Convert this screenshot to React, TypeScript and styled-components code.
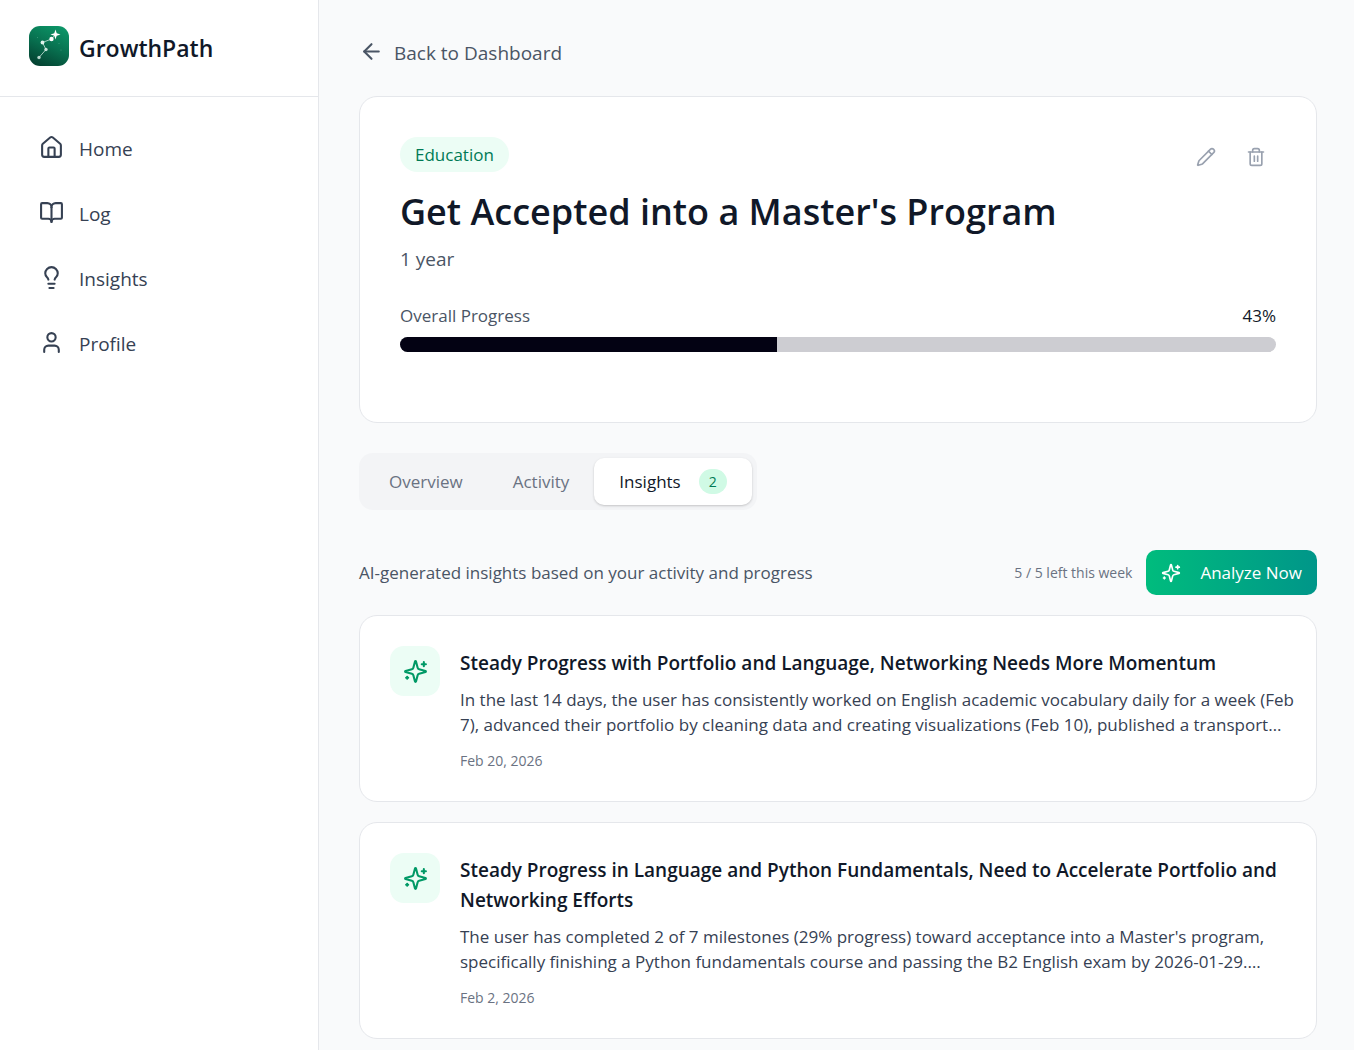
import React from 'react';
import styled, { createGlobalStyle } from 'styled-components';
import { ArrowLeft, BookOpen, Lightbulb } from 'lucide-react';

const GlobalStyle = createGlobalStyle`
  *, *::before, *::after { box-sizing: border-box; }
  body {
    margin: 0;
    background: #f9fafb;
    color: #101828;
    font-family: 'Open Sans', 'Noto Sans', 'Segoe UI', sans-serif;
    font-size: 17px;
    line-height: 25px;
  }
  h1, h2, p, ul { margin: 0; padding: 0; }
  button { font: inherit; border: 0; cursor: pointer; }
  a { color: inherit; text-decoration: none; }
`;

const Page = styled.div`
  display: flex;
  min-height: 100vh;
`;

const Sidebar = styled.aside`
  flex: 0 0 319px;
  background: #ffffff;
  border-right: 1px solid #e5e7eb;
`;

const Brand = styled.div`
  display: flex;
  align-items: center;
  gap: 10px;
  height: 97px;
  padding: 0 29px 4px;
  border-bottom: 1px solid #e5e7eb;
`;

const BrandName = styled.span`
  padding-top: 4px;
  font-size: 23px;
  line-height: 30px;
  font-weight: 600;
`;

const NavList = styled.ul`
  display: flex;
  flex-direction: column;
  gap: 5px;
  padding: 20px;
  list-style: none;
`;

const NavLink = styled.a`
  display: flex;
  align-items: center;
  gap: 15px;
  height: 60px;
  padding: 0 20px 0 19px;
  border-radius: 12px;
  font-size: 19px;
  line-height: 30px;
  color: #364153;
`;

const LinkLabel = styled.span`
  padding-top: 3px;
`;

const Main = styled.main`
  flex: 1;
  min-width: 0;
  padding: 35px 37px 10px 40px;
`;

const BackLink = styled.a`
  display: inline-flex;
  align-items: center;
  gap: 10px;
  margin-bottom: 28px;
  font-size: 19px;
  line-height: 30px;
  color: #4a5565;
`;

const Card = styled.section`
  background: #ffffff;
  border: 1px solid #e5e7eb;
  border-radius: 18px;
`;

const GoalCard = styled(Card)`
  padding: 40px 40px 70px;
`;

const GoalTop = styled.div`
  display: flex;
  justify-content: space-between;
  align-items: flex-start;
  margin-bottom: 29px;
`;

const Category = styled.span`
  display: inline-block;
  padding: 5px 15px;
  border-radius: 999px;
  background: #ecfdf5;
  color: #007a55;
`;

const GoalTitle = styled.h1`
  margin: 17px 0 10px;
  font-size: 36px;
  line-height: 45px;
  font-weight: 600;
`;

const Duration = styled.p`
  font-size: 19px;
  line-height: 30px;
  color: #4a5565;
`;

const Actions = styled.div`
  display: flex;
  gap: 10px;
`;

const IconButton = styled.button`
  display: grid;
  place-items: center;
  width: 40px;
  height: 40px;
  padding: 0;
  border-radius: 10px;
  background: transparent;
  color: #99a1af;
`;

const ProgressLabels = styled.div`
  display: flex;
  justify-content: space-between;
  margin-bottom: 9px;
  color: #4a5565;
`;

const ProgressValue = styled.span`
  color: #101828;
`;

const Track = styled.div`
  height: 15px;
  border-radius: 999px;
  background: #cdcdd2;
  overflow: hidden;
`;

const Fill = styled.div`
  height: 100%;
  background: #030213;
`;

const Tabs = styled.div`
  display: inline-flex;
  margin: 30px 0 40px;
  padding: 5px;
  border-radius: 14px;
  background: #f3f4f6;
`;

const Tab = styled.button<{ $active?: boolean }>`
  display: flex;
  align-items: center;
  gap: 18px;
  height: 47px;
  padding: 0 25px;
  border-radius: 10px;
  background: ${(p) => (p.$active ? '#ffffff' : 'transparent')};
  color: ${(p) => (p.$active ? '#101828' : '#6a7282')};
  box-shadow: ${(p) => (p.$active ? '0 1px 3px rgba(0, 0, 0, 0.1), 0 1px 2px rgba(0, 0, 0, 0.1)' : 'none')};
`;

const Count = styled.span`
  padding: 0 10px;
  border-radius: 999px;
  background: #d0fae5;
  color: #007a55;
  font-size: 14px;
  line-height: 25px;
`;

const Toolbar = styled.div`
  display: flex;
  align-items: center;
  justify-content: space-between;
  margin-bottom: 20px;
  color: #4a5565;
`;

const ToolbarEnd = styled.div`
  display: flex;
  align-items: center;
  gap: 14px;
`;

const Small = styled.span`
  display: block;
  font-size: 14px;
  line-height: 20px;
  color: #6a7282;
`;

const AnalyzeButton = styled.button`
  display: flex;
  align-items: center;
  gap: 19px;
  height: 45px;
  padding: 0 15px;
  border-radius: 10px;
  background: linear-gradient(90deg, #00bc7d, #009689);
  color: #ffffff;
`;

const InsightList = styled.div`
  display: flex;
  flex-direction: column;
  gap: 20px;
`;

const InsightCard = styled(Card)`
  display: flex;
  gap: 20px;
  padding: 30px 15px 30px 30px;
`;

const InsightIcon = styled.div`
  display: grid;
  place-items: center;
  flex: 0 0 50px;
  height: 50px;
  border-radius: 14px;
  background: #ecfdf5;
  color: #009966;
`;

const InsightBody = styled.div`
  min-width: 0;
`;

const InsightTitle = styled.h2`
  padding-top: 2px;
  margin-bottom: 9px;
  font-size: 19px;
  line-height: 30px;
  font-weight: 600;
`;

const InsightText = styled.p`
  margin-bottom: 14px;
  color: #364153;
`;

const iconProps = {
  viewBox: '0 0 24 24',
  fill: 'none',
  stroke: 'currentColor',
  strokeWidth: 2,
  strokeLinecap: 'round' as const,
  strokeLinejoin: 'round' as const,
  'aria-hidden': true,
};

const HomeIcon = () => (
  <svg {...iconProps} width={25} height={25}>
    <path d="M15 21v-8a1 1 0 0 0-1-1h-4a1 1 0 0 0-1 1v8" />
    <path d="M3 10a2 2 0 0 1 .709-1.528l7-6a2 2 0 0 1 2.582 0l7 6A2 2 0 0 1 21 10v9a2 2 0 0 1-2 2H5a2 2 0 0 1-2-2z" />
  </svg>
);

const UserIcon = () => (
  <svg {...iconProps} width={25} height={25}>
    <path d="M19 21v-2a4 4 0 0 0-4-4H9a4 4 0 0 0-4 4v2" />
    <circle cx="12" cy="7" r="4" />
  </svg>
);

const PencilIcon = () => (
  <svg {...iconProps} width={20} height={20}>
    <path d="M21.174 6.812a1 1 0 0 0-3.986-3.987L3.842 16.174a2 2 0 0 0-.5.83l-1.321 4.352a.5.5 0 0 0 .623.622l4.353-1.32a2 2 0 0 0 .83-.497z" />
    <path d="m15 5 4 4" />
  </svg>
);

const TrashIcon = () => (
  <svg {...iconProps} width={20} height={20}>
    <path d="M3 6h18" />
    <path d="M19 6v14c0 1-1 2-2 2H7c-1 0-2-1-2-2V6" />
    <path d="M8 6V4c0-1 1-2 2-2h4c1 0 2 1 2 2v2" />
    <path d="M10 11v6M14 11v6" />
  </svg>
);

const SparklesIcon = ({ size }: { size: number }) => (
  <svg {...iconProps} width={size} height={size}>
    <path d="M9.937 15.5A2 2 0 0 0 8.5 14.063l-6.135-1.582a.5.5 0 0 1 0-.962L8.5 9.936A2 2 0 0 0 9.937 8.5l1.582-6.135a.5.5 0 0 1 .963 0L14.063 8.5A2 2 0 0 0 15.5 9.937l6.135 1.581a.5.5 0 0 1 0 .964L15.5 14.063a2 2 0 0 0-1.437 1.437l-1.582 6.135a.5.5 0 0 1-.963 0z" />
    <path d="M20 3v4M22 5h-4" />
    <path d="M4 17v2M5 18H3" />
  </svg>
);

const Logo = () => (
  <svg width="40" height="40" viewBox="0 0 40 40" aria-hidden="true">
    <defs>
      <linearGradient id="logoFill" x1="0.75" y1="0" x2="0.3" y2="1">
        <stop offset="0" stopColor="#0c9567" />
        <stop offset="0.5" stopColor="#087150" />
        <stop offset="1" stopColor="#044332" />
      </linearGradient>
    </defs>
    <rect width="40" height="40" rx="11" fill="url(#logoFill)" />
    <path d="M10 31.500 17 23.500 13.500 16.500 22.500 13 26 9" fill="none" stroke="#d5eee5" strokeOpacity="0.75" strokeWidth="1" />
    <g fill="#dff3ec">
      <circle cx="10" cy="31.500" r="1.700" opacity="0.8" />
      <circle cx="17" cy="23.500" r="1.700" opacity="0.85" />
      <circle cx="13.500" cy="16.500" r="1.900" />
      <circle cx="22.500" cy="13" r="2.200" fill="#ffffff" />
    </g>
    <path d="M26.500 3.500 27.700 7.300 31.500 8.500 27.700 9.700 26.500 13.500 25.300 9.700 21.500 8.500 25.300 7.300Z" fill="#ffffff" />
    <g fill="#7fc9ae" opacity="0.5">
      <circle cx="8.500" cy="11.500" r="0.500" />
      <circle cx="30" cy="17.500" r="0.500" />
      <circle cx="32" cy="24" r="0.500" />
    </g>
  </svg>
);

const navItems = [
  { label: 'Home', icon: <HomeIcon /> },
  { label: 'Log', icon: <BookOpen size={25} /> },
  { label: 'Insights', icon: <Lightbulb size={25} /> },
  { label: 'Profile', icon: <UserIcon /> },
];

const insights = [
  {
    title: 'Steady Progress with Portfolio and Language, Networking Needs More Momentum',
    text: 'In the last 14 days, the user has consistently worked on English academic vocabulary daily for a week (Feb 7), advanced their portfolio by cleaning data and creating visualizations (Feb 10), published a transport…',
    date: 'Feb 20, 2026',
  },
  {
    title: 'Steady Progress in Language and Python Fundamentals, Need to Accelerate Portfolio and Networking Efforts',
    text: "The user has completed 2 of 7 milestones (29% progress) toward acceptance into a Master's program, specifically finishing a Python fundamentals course and passing the B2 English exam by 2026-01-29.…",
    date: 'Feb 2, 2026',
  },
];

const progress = 43;

export default function App() {
  return (
    <Page>
      <GlobalStyle />
      <Sidebar>
        <Brand>
          <Logo />
          <BrandName>GrowthPath</BrandName>
        </Brand>
        <nav>
          <NavList>
            {navItems.map((item) => (
              <li key={item.label}>
                <NavLink href="#">
                  {item.icon}
                  <LinkLabel>{item.label}</LinkLabel>
                </NavLink>
              </li>
            ))}
          </NavList>
        </nav>
      </Sidebar>
      <Main>
        <BackLink href="#">
          <ArrowLeft size={25} />
          <LinkLabel>Back to Dashboard</LinkLabel>
        </BackLink>
        <GoalCard>
          <GoalTop>
            <div>
              <Category>Education</Category>
              <GoalTitle>Get Accepted into a Master's Program</GoalTitle>
              <Duration>1 year</Duration>
            </div>
            <Actions>
              <IconButton type="button" aria-label="Edit goal">
                <PencilIcon />
              </IconButton>
              <IconButton type="button" aria-label="Delete goal">
                <TrashIcon />
              </IconButton>
            </Actions>
          </GoalTop>
          <ProgressLabels>
            <span id="progress-label">Overall Progress</span>
            <ProgressValue>{progress}%</ProgressValue>
          </ProgressLabels>
          <Track role="progressbar" aria-labelledby="progress-label" aria-valuenow={progress} aria-valuemin={0} aria-valuemax={100}>
            <Fill style={{ width: `${progress}%` }} />
          </Track>
        </GoalCard>
        <Tabs role="tablist">
          <Tab type="button" role="tab" aria-selected={false}>Overview</Tab>
          <Tab type="button" role="tab" aria-selected={false}>Activity</Tab>
          <Tab type="button" role="tab" aria-selected $active>
            Insights
            <Count>2</Count>
          </Tab>
        </Tabs>
        <Toolbar>
          <p>AI-generated insights based on your activity and progress</p>
          <ToolbarEnd>
            <Small>5 / 5 left this week</Small>
            <AnalyzeButton type="button">
              <SparklesIcon size={20} />
              Analyze Now
            </AnalyzeButton>
          </ToolbarEnd>
        </Toolbar>
        <InsightList>
          {insights.map((insight) => (
            <InsightCard key={insight.date} as="article">
              <InsightIcon>
                <SparklesIcon size={25} />
              </InsightIcon>
              <InsightBody>
                <InsightTitle>{insight.title}</InsightTitle>
                <InsightText>{insight.text}</InsightText>
                <Small>{insight.date}</Small>
              </InsightBody>
            </InsightCard>
          ))}
        </InsightList>
      </Main>
    </Page>
  );
}
